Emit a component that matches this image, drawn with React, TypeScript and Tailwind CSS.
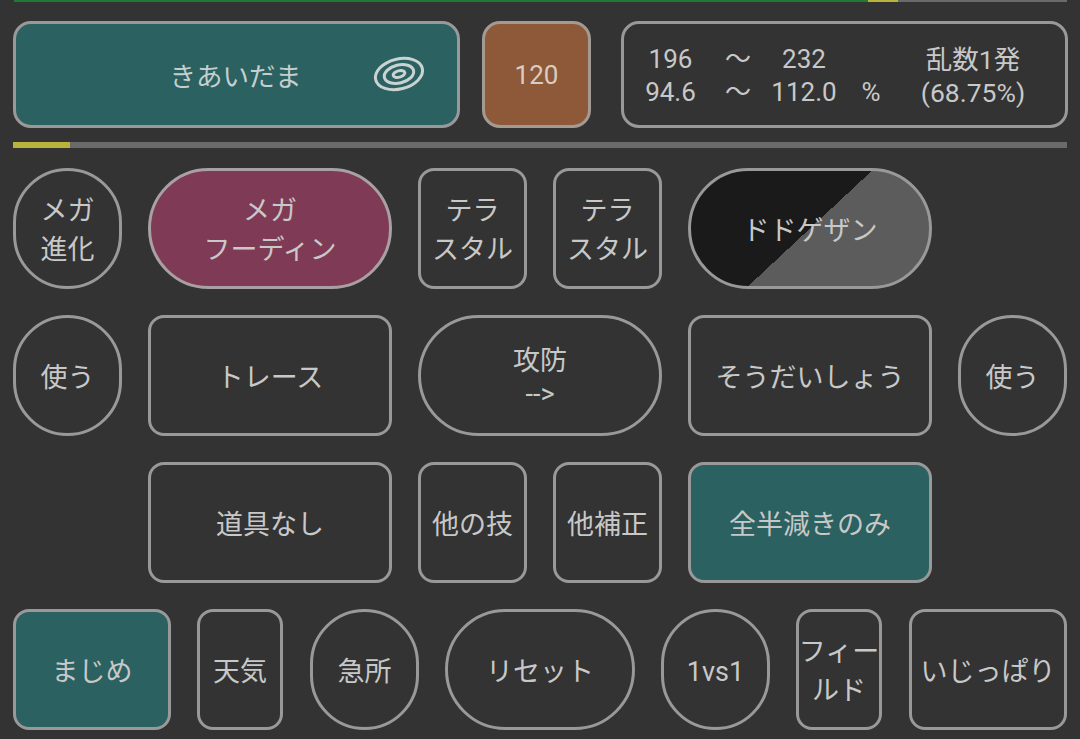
const base = "flex shrink-0 items-center justify-center border-[3px] border-[#999999] text-center text-[#c8c8c8] text-[27px] h-[121px]";
const rect = "rounded-[16px]";
const pill = "rounded-full";
const two = "pt-[5px] leading-[39px]";
const one = "pt-[7px] leading-[39px]";

function Btn({ w, round, bg, children, lh = one, className = "" }: { w: string; round?: boolean; bg?: string; children: React.ReactNode; lh?: string; className?: string }) {
  return <div className={`${base} ${lh} ${w} ${round ? pill : rect} ${bg ?? ""} ${className}`}>{children}</div>;
}

function Target() {
  return (
    <svg width="54" height="40" viewBox="0 0 54 40" className="absolute left-[356px] top-[30px]" fill="none" stroke="#c9d3d2" strokeWidth="3">
      <g transform="rotate(-14 27 20)">
        <ellipse cx="27" cy="20" rx="24" ry="15" />
        <ellipse cx="27" cy="20" rx="15" ry="9" />
        <ellipse cx="27" cy="20" rx="6" ry="3.2" />
      </g>
    </svg>
  );
}

export default function App() {
  return (
    <div className="relative h-[739px] w-[1080px] overflow-hidden bg-[#333333] font-['Roboto','Noto_Sans_CJK_JP',sans-serif]">
      <div className="ml-[14px] flex h-[2px] w-[1053px]">
        <div className="w-[854px] bg-[#1f7a36]" />
        <div className="w-[30px] bg-[#b8b43a]" />
        <div className="flex-1 bg-[#6a6a6a]" />
      </div>

      <div className="ml-[13px] mt-[19px] flex h-[107px] w-[1055px]">
        <div className="relative flex h-full w-[447px] items-center justify-center rounded-[18px] border-[3px] border-[#999999] bg-[#2b6160] pt-[4px] text-[26.5px] text-[#c4cfce]">
          <span className="-ml-[2px]">きあいだま</span>
          <Target />
        </div>
        <div className="ml-[22px] flex h-full w-[109px] items-center justify-center rounded-[18px] border-[3px] border-[#a39a93] bg-[#8e5938] pt-[2px] text-[26px] text-[#d8cdc5]">120</div>
        <div className="ml-[30px] grid h-full w-[447px] grid-cols-[93px_42px_90px_44px_160px] content-center rounded-[18px] border-[3px] border-[#999999] pt-[3px] text-center text-[26px] leading-[33px] text-[#c8c8c8]">
          <span>196</span><span>～</span><span>232</span><span></span><span className="text-[26.5px]">乱数1発</span>
          <span>94.6</span><span>～</span><span>112.0</span><span>%</span><span className="text-[26.5px]">(68.75%)</span>
        </div>
      </div>

      <div className="ml-[13px] mt-[14px] flex h-[6px] w-[1054px] bg-[#6a6a6a]">
        <div className="w-[57px] bg-[#b8b43a]" />
      </div>

      <div className="ml-[13px] mt-[19.5px] flex flex-col gap-[26px]">
        <div className="flex gap-[26px]">
          <Btn w="w-[109px]" round lh={two}>メガ<br />進化</Btn>
          <Btn w="w-[244px]" round lh={two} bg="bg-[#7f3a55]" className="border-[#a8a0a3]">メガ<br />フーディン</Btn>
          <Btn w="w-[109px]" lh={two}>テラ<br />スタル</Btn>
          <Btn w="w-[109px]" lh={two}>テラ<br />スタル</Btn>
          <Btn w="w-[244px]" round bg="bg-[linear-gradient(137deg,#1a1a1a_50%,#5c5c5c_50%)]">ドドゲザン</Btn>
        </div>
        <div className="flex gap-[26px]">
          <Btn w="w-[109px]" round>使う</Btn>
          <Btn w="w-[244px]">トレース</Btn>
          <Btn w="w-[244px]" round lh="pt-[5px] leading-[33px]">攻防<br />--&gt;</Btn>
          <Btn w="w-[244px]">そうだいしょう</Btn>
          <Btn w="w-[109px]" round>使う</Btn>
        </div>
        <div className="ml-[135px] flex gap-[26px]">
          <Btn w="w-[244px]">道具なし</Btn>
          <Btn w="w-[109px]">他の技</Btn>
          <Btn w="w-[109px]">他補正</Btn>
          <Btn w="w-[244px]" bg="bg-[#2b6160]">全半減きのみ</Btn>
        </div>
        <div className="flex gap-[26px]">
          <Btn w="w-[158px]" bg="bg-[#2b6160]">まじめ</Btn>
          <Btn w="w-[86px]">天気</Btn>
          <Btn w="w-[109px]" round className="ml-[1px]">急所</Btn>
          <Btn w="w-[190px]" round>リセット</Btn>
          <Btn w="w-[109px]" round>1vs1</Btn>
          <Btn w="w-[86px]" lh={two} className="whitespace-nowrap">フィー<br />ルド</Btn>
          <Btn w="w-[158px]" className="ml-[1px]">いじっぱり</Btn>
        </div>
      </div>
    </div>
  );
}
